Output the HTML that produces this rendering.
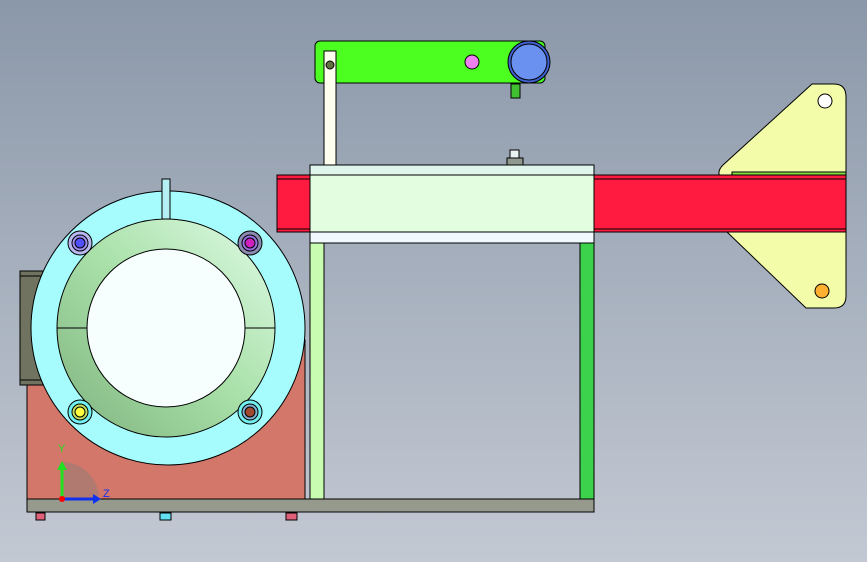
<!DOCTYPE html>
<html><head><style>
html,body{margin:0;padding:0}
body{width:867px;height:562px;overflow:hidden;background:linear-gradient(#8b98a9,#c3c9d3);}
svg{display:block}
</style></head><body>
<svg width="867" height="562" viewBox="0 0 867 562" stroke="#000" stroke-width="1">
<defs>
<linearGradient id="g" x1="1" y1="0" x2="0" y2="1"><stop offset="0" stop-color="#e0fbe6"/><stop offset="0.5" stop-color="#a8e0a8"/><stop offset="1" stop-color="#7fb27f"/></linearGradient>
</defs>
<!-- red base -->
<rect x="27" y="340" width="278" height="159" fill="#d3776a"/>
<!-- dark block -->
<rect x="20" y="271" width="44" height="114" fill="#6f7360"/>
<line x1="20" y1="276" x2="64" y2="276"/><line x1="20" y1="380" x2="64" y2="380"/>
<!-- cyan disc -->
<circle cx="168" cy="328" r="137" fill="#a6fcfc"/>
<!-- tab -->
<rect x="162" y="179" width="8" height="40" fill="#b5f0f5"/>
<circle cx="166" cy="328" r="109" fill="url(#g)"/>
<circle cx="166" cy="328" r="79" fill="#f6fefe"/>
<line x1="57" y1="328" x2="87" y2="328"/><line x1="245" y1="328" x2="275" y2="328"/>
<!-- bolts -->
<circle cx="80" cy="243" r="12" fill="#b8b8f0"/><circle cx="80" cy="243" r="8" fill="#a090f0"/><circle cx="80" cy="243" r="5" fill="#5050ff"/>
<circle cx="250" cy="243" r="12" fill="#8a8ab0"/><circle cx="250" cy="243" r="8" fill="#9a70e0"/><circle cx="250" cy="243" r="5" fill="#d020c0"/>
<circle cx="80" cy="412" r="12" fill="#70f0f0"/><circle cx="80" cy="412" r="8" fill="#c0e060"/><circle cx="80" cy="412" r="5" fill="#ffff40"/>
<circle cx="250" cy="412" r="12" fill="#70f0f0"/><circle cx="250" cy="412" r="8" fill="#80b0d0"/><circle cx="250" cy="412" r="5" fill="#a04830"/>
<!-- base plate -->
<rect x="27" y="499" width="567" height="13" fill="#969a8d"/>
<rect x="36" y="513" width="9" height="7" fill="#e0607a"/>
<rect x="160" y="513" width="11" height="7" fill="#60e0f0"/>
<rect x="286" y="513" width="11" height="7" fill="#e0607a"/>
<!-- bracket -->
<path d="M812 84 L834 84 Q846 84 846 97 L846 296 Q846 308 834 308 L806 308 L727 232 L721 178 Q716 172 723 165 Z" fill="#f3fca8"/>
<circle cx="825" cy="101" r="7" fill="#fff"/>
<circle cx="822" cy="291" r="7" fill="#ffb030"/>
<rect x="732" y="172" width="114" height="3" fill="#80e040"/>
<!-- red beam -->
<rect x="277" y="175" width="569" height="57" fill="#ff1a40"/>
<line x1="277" y1="179" x2="846" y2="179"/><line x1="277" y1="229" x2="846" y2="229"/>
<!-- legs -->
<rect x="310" y="243" width="14" height="256" fill="#c8fcb0"/>
<rect x="580" y="243" width="14" height="256" fill="#3cd24c"/>
<!-- box -->
<rect x="310" y="165" width="284" height="10" fill="#e0f5ec"/>
<rect x="310" y="175" width="284" height="57" fill="#e2fde0"/>
<rect x="310" y="232" width="284" height="11" fill="#f0fafe"/>
<!-- small stud -->
<rect x="510" y="150" width="9" height="8" fill="#e8f0f0"/>
<rect x="507" y="158" width="16" height="7" fill="#909890"/>
<!-- arm -->
<rect x="315" y="41" width="230" height="42" rx="5" fill="#4cff20"/>
<rect x="324" y="51" width="12" height="114" fill="#fffff0"/>
<circle cx="330" cy="65" r="4" fill="#607040"/>
<circle cx="472" cy="62" r="7" fill="#f080f0"/>
<circle cx="529" cy="62" r="21" fill="#4060d0"/>
<circle cx="529" cy="62" r="18" fill="#6a90f0"/>
<rect x="511" y="84" width="9" height="14" fill="#40c030"/>
<!-- axis -->
<path d="M62 499 L62 462 A37 37 0 0 1 99 499 Z" fill="#b07a70" stroke="none"/>
<line x1="62" y1="499" x2="62" y2="468" stroke="#20e020" stroke-width="3"/>
<path d="M57 470 L62 461 L67 470Z" fill="#20e020" stroke="none"/>
<line x1="62" y1="499" x2="94" y2="499" stroke="#1030f0" stroke-width="3"/>
<path d="M93 494 L101 499 L93 504Z" fill="#1030f0" stroke="none"/>
<circle cx="62" cy="499" r="3" fill="#f00" stroke="none"/>
<text x="58" y="452" font-family="Liberation Sans, sans-serif" font-size="11" fill="#20e020" stroke="none">Y</text>
<text x="103" y="497" font-family="Liberation Sans, sans-serif" font-size="11" fill="#1030f0" stroke="none">Z</text>
</svg>
</body></html>
